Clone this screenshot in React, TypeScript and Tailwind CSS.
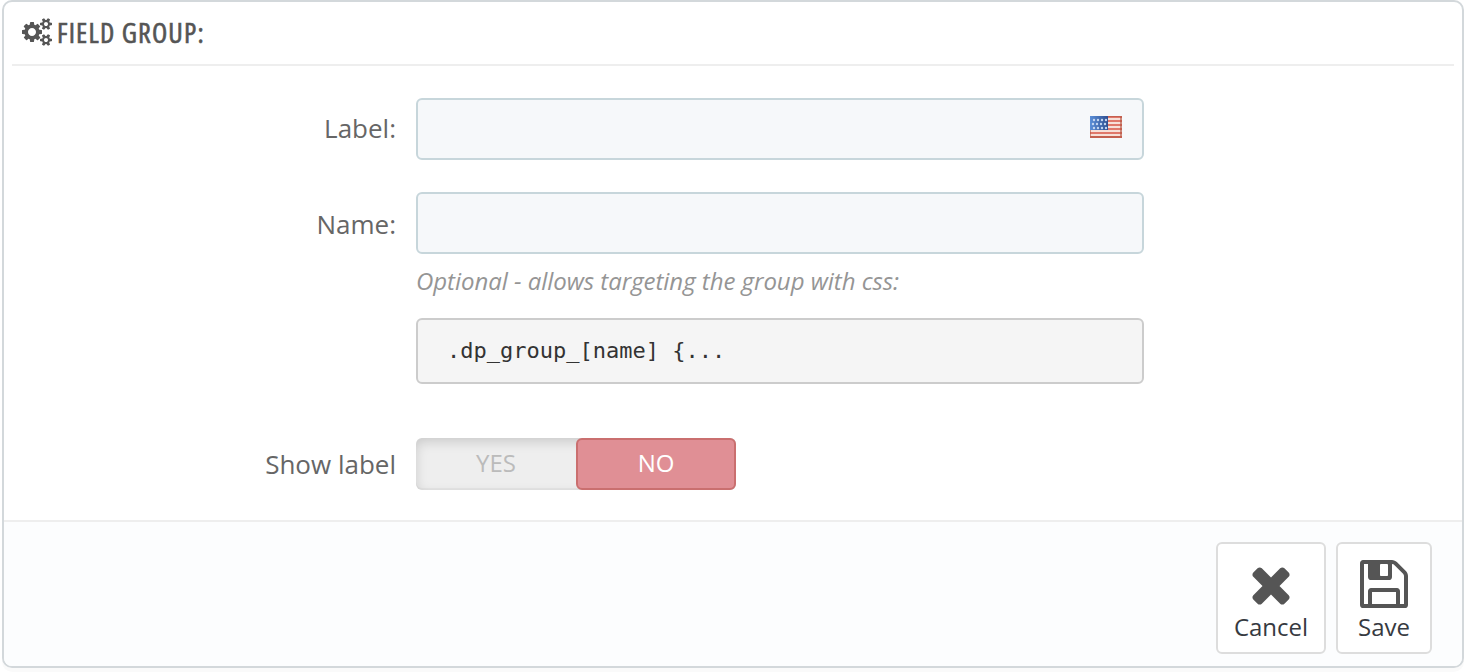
import React from "react";

const COGS =
  "M896 896q0-106-75-181t-181-75-181 75-75 181 75 181 181 75 181-75 75-181zm768 512q0-52-38-90t-90-38-90 38-38 90q0 53 37.5 90.5t90.5 37.5 90.5-37.5 37.5-90.5zm0-1024q0-52-38-90t-90-38-90 38-38 90q0 53 37.5 90.5t90.5 37.5 90.5-37.5 37.5-90.5zm-384 421v185q0 10-7 19.5t-16 10.5l-155 24q-11 35-32 76 34 48 90 115 7 11 7 20 0 12-7 19-23 30-82.5 89.5t-78.5 59.5q-11 0-21-7l-115-90q-37 19-77 31-11 108-23 155-7 24-30 24h-186q-11 0-20-7.5t-10-17.5l-23-153q-34-10-75-31l-118 89q-7 7-20 7-11 0-21-8-144-133-144-160 0-9 7-19 10-14 41-53t47-61q-23-44-35-82l-152-24q-10-1-17-9.5t-7-19.5v-185q0-10 7-19.5t16-10.5l155-24q11-35 32-76-34-48-90-115-7-11-7-20 0-12 7-20 22-30 82-89t79-59q11 0 21 7l115 90q34-18 77-32 11-108 23-154 7-24 30-24h186q11 0 20 7.5t10 17.5l23 153q34 10 75 31l118-89q8-7 20-7 11 0 21 8 144 133 144 160 0 8-7 19-12 16-42 54t-45 60q23 48 34 82l152 23q10 2 17 10.5t7 19.5zm640 533v140q0 16-149 31-12 27-30 52 51 113 51 138 0 4-4 7-122 71-124 71-8 0-46-47t-52-68q-20 2-30 2t-30-2q-14 21-52 68t-46 47q-2 0-124-71-4-3-4-7 0-25 51-138-18-25-30-52-149-15-149-31v-140q0-16 149-31 13-29 30-52-51-113-51-138 0-4 4-7 4-2 35-20t59-34 30-16q8 0 46 46.5t52 67.5q20-2 30-2t30 2q51-71 92-112l6-2q4 0 124 70 4 3 4 7 0 25-51 138 17 23 30 52 149 15 149 31zm0-1024v140q0 16-149 31-12 27-30 52 51 113 51 138 0 4-4 7-122 71-124 71-8 0-46-47t-52-68q-20 2-30 2t-30-2q-14 21-52 68t-46 47q-2 0-124-71-4-3-4-7 0-25 51-138-18-25-30-52-149-15-149-31v-140q0-16 149-31 13-29 30-52-51-113-51-138 0-4 4-7 4-2 35-20t59-34 30-16q8 0 46 46.5t52 67.5q20-2 30-2t30 2q51-71 92-112l6-2q4 0 124 70 4 3 4 7 0 25-51 138 17 23 30 52 149 15 149 31z";
const TIMES =
  "M1490 1322q0 40-28 68l-136 136q-28 28-68 28t-68-28l-294-294-294 294q-28 28-68 28t-68-28l-136-136q-28-28-28-68t28-68l294-294-294-294q-28-28-28-68t28-68l136-136q28-28 68-28t68 28l294 294 294-294q28-28 68-28t68 28l136 136q28 28 28 68t-28 68l-294 294 294 294q28 28 28 68z";
const FLOPPY =
  "M512 1536h768v-384h-768v384zm896 0h128v-896q0-14-10-38.5t-20-34.5l-281-281q-10-10-34-20t-39-10v416q0 40-28 68t-68 28h-576q-40 0-68-28t-28-68v-416h-128v1280h128v-416q0-40 28-68t68-28h832q40 0 68 28t28 68v416zm-384-928v-320q0-13-9.5-22.5t-22.5-9.5h-192q-13 0-22.5 9.5t-9.5 22.5v320q0 13 9.5 22.5t22.5 9.5h192q13 0 22.5-9.5t9.5-22.5zm640 32v928q0 40-28 68t-68 28h-1344q-40 0-68-28t-28-68v-1344q0-40 28-68t68-28h928q40 0 88 20t76 48l280 280q28 28 48 76t20 88z";

function Flag() {
  return (
    <svg width="32" height="22" viewBox="0 0 32 22" className="mt-4 mr-5">
      <defs>
        <linearGradient id="canton" x1="0" x2="1">
          <stop offset="0" stopColor="#5b8fd8" />
          <stop offset="1" stopColor="#2f4f90" />
        </linearGradient>
        <filter id="soften" x="0" y="0" width="1" height="1">
          <feGaussianBlur stdDeviation="0.55" />
        </filter>
      </defs>
      <rect width="32" height="22" fill="#c98273" />
      <g filter="url(#soften)">
        <rect width="32" height="22" fill="#f7e0d8" />
        {[0, 4, 8, 12, 16, 20].map((y) => (
          <rect key={y} y={y} width="32" height="2" fill="#e0786a" />
        ))}
        <rect width="18" height="14" fill="url(#canton)" />
        {[4, 8, 12].map((y) =>
          [4, 8, 12, 16].map((x) => (
            <circle key={`${x}-${y}`} cx={x + (y === 8 ? -1 : 0)} cy={y} r="1.2" fill="#c3d6f0" />
          )),
        )}
        <path d="M0 14V21H31V0H18" fill="none" stroke="#b0523f" strokeOpacity="0.6" strokeWidth="2" />
      </g>
    </svg>
  );
}

function Label({ className, children }: { className: string; children: React.ReactNode }) {
  return (
    <div className={`w-[392px] shrink-0 text-right text-[26px] leading-9 text-[#666] ${className}`}>{children}</div>
  );
}

function ActionButton({ path, label, className }: { path: string; label: string; className: string }) {
  return (
    <button
      className={`flex h-28 flex-col items-center rounded-[6px] border-2 border-[#ddd] bg-white pt-3 text-[24px] text-[#363a41] ${className}`}
    >
      <svg width="56" height="56" viewBox="0 0 1792 1792" fill="#555" className="shrink-0">
        <path d={path} />
      </svg>
      <span className="leading-[30px]">{label}</span>
    </button>
  );
}

export default function App() {
  return (
    <div className="h-[672px] bg-white px-0.5 font-['Open_Sans',sans-serif]">
      <div className="flex h-[668px] flex-col overflow-hidden rounded-[10px] border-2 border-[#d3d8db] bg-white shadow-[0_4px_0_rgba(0,0,0,0.02)]">
        <div className="mx-2 flex h-16 shrink-0 items-center border-b-2 border-[#eee] pb-0.5 pl-2.5">
          <svg width="30" height="28" viewBox="0 0 1920 1792" fill="#555" className="shrink-0">
            <path d={COGS} />
          </svg>
          <h3 className="ml-[5px] text-[28px] leading-[34px] font-medium tracking-[1.15px] text-[#555] [-webkit-text-stroke:0.6px_#555] [font-stretch:78%]">
            FIELD GROUP:
          </h3>
        </div>

        <div className="flex h-[454px] shrink-0 flex-col">
          <div className="mt-8 flex h-[62px]">
            <Label className="pt-3">Label:</Label>
            <div className="ml-5 flex w-[728px] justify-end rounded-[6px] border-2 border-[#c7d6db] bg-[#f6f8fa]">
              <Flag />
            </div>
          </div>
          <div className="mt-8 flex">
            <Label className="pt-3.5">Name:</Label>
            <div className="ml-5 w-[728px]">
              <div className="h-[62px] rounded-[6px] border-2 border-[#c7d6db] bg-[#f6f8fa]" />
              <p className="mt-[9px] h-9 text-[24px] leading-9 tracking-[-0.04px] text-[#959595] italic">
                Optional - allows targeting the group with css:
              </p>
              <pre className="mt-[19px] h-[66px] rounded-[6px] border-2 border-[#ccc] bg-[#f5f5f5] pt-[15px] pl-[29px] font-['DejaVu_Sans_Mono',monospace] text-[22px] leading-8 text-[#333]">
                .dp_group_[name] {"{"}...
              </pre>
            </div>
          </div>
          <div className="mt-[54px] flex h-[52px]">
            <Label className="pt-2">Show label</Label>
            <div className="ml-5 flex w-80 rounded-[6px] bg-[#eee] text-center text-[24px] leading-[50px] shadow-[inset_0_4px_12px_rgba(0,0,0,0.15),inset_0_-2px_0_rgba(0,0,0,0.03)]">
              <span className="w-40 text-[#bbb]">YES</span>
              <span className="w-40 rounded-[6px] border-2 border-[#ca6f6f] bg-[#e08f95] leading-[46px] text-white">NO</span>
            </div>
          </div>
        </div>

        <div className="flex grow justify-end gap-2.5 border-t-2 border-[#eee] bg-[#fcfdfe] pt-5 pr-[30px]">
          <ActionButton path={TIMES} label="Cancel" className="w-[110px]" />
          <ActionButton path={FLOPPY} label="Save" className="w-24" />
        </div>
      </div>
    </div>
  );
}
